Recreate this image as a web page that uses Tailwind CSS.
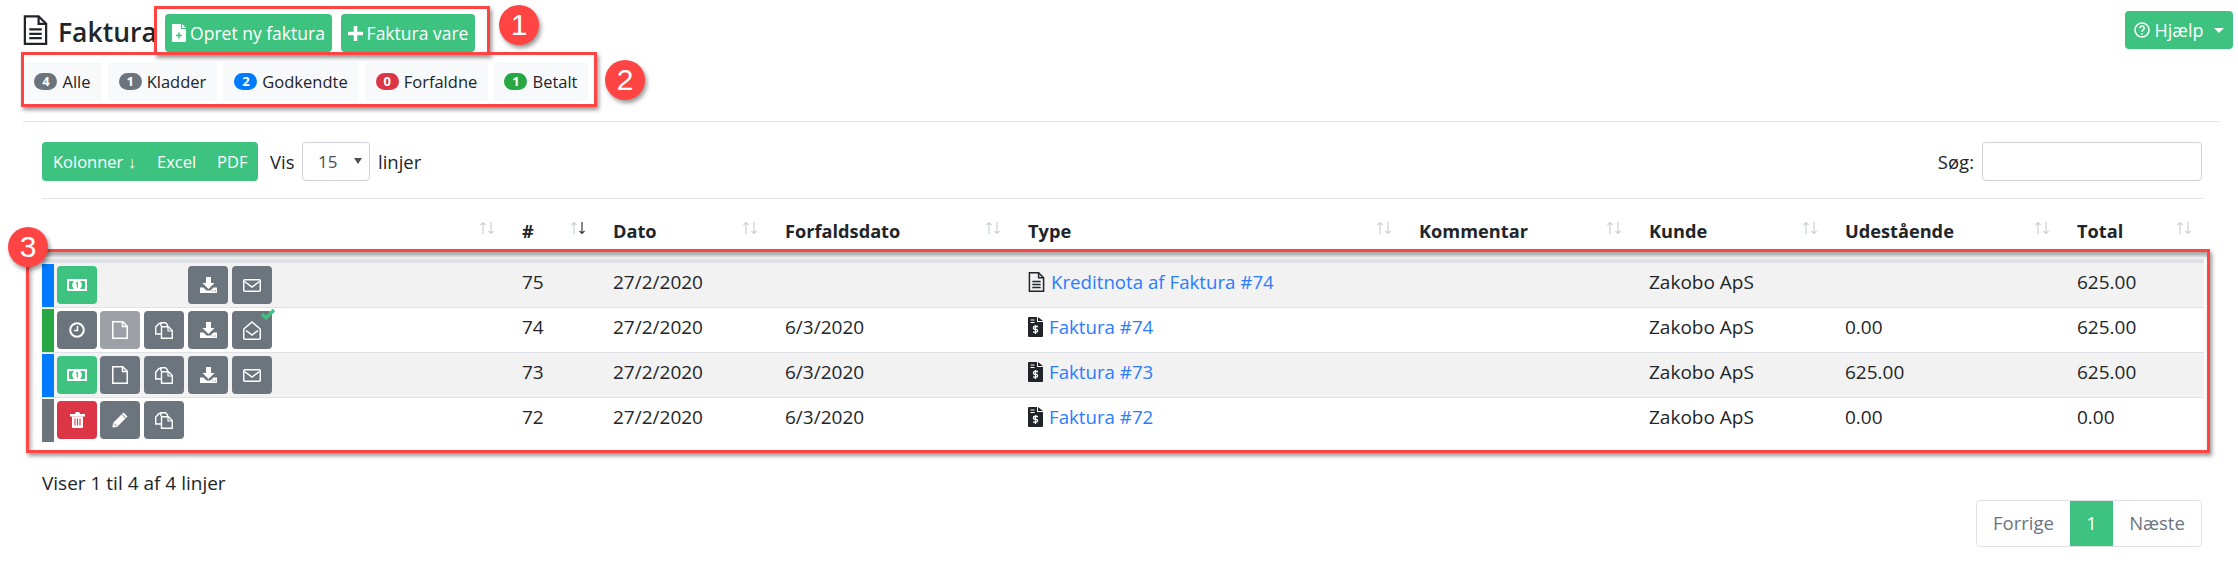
<!DOCTYPE html>
<html lang="da">
<head>
<meta charset="utf-8">
<title>Faktura</title>
<script src="https://cdn.jsdelivr.net/npm/@tailwindcss/browser@4"></script>
</head>
<body class="relative h-[567px] w-[2238px] overflow-hidden bg-white font-['Open_Sans',sans-serif] text-[18.5px] leading-6 text-[#212529]">
  <!-- icon sprite -->
  <svg class="hidden" aria-hidden="true">
    <symbol id="i-doc-lines" viewBox="0 0 20 24"><path d="M1.5 1h11l6 6v16h-17z" fill="none" stroke="currentColor" stroke-width="1.8"/><path d="M12.5 1v6h6" fill="none" stroke="currentColor" stroke-width="1.8"/><path d="M5 11.5h10M5 15h10M5 18.5h10" stroke="currentColor" stroke-width="1.8"/></symbol>
    <symbol id="i-invoice" viewBox="0 0 15 20"><path d="M0 1a1 1 0 0 1 1-1h8v5h6v14a1 1 0 0 1-1 1H1a1 1 0 0 1-1-1z" fill="currentColor"/><path d="M10 0l5 4h-5z" fill="currentColor"/><path d="M2.500 3h4M2.500 5.500h4" stroke="#fff" stroke-width="1.200"/><path d="M10 9.500H6.800a1.300 1.300 0 0 0 0 2.800h1.400a1.300 1.300 0 0 1 0 2.800H5M7.500 8v9" fill="none" stroke="#fff" stroke-width="1.300"/></symbol>
    <symbol id="i-file-plus" viewBox="0 0 14 18"><path d="M0 1q0-1 1-1h8v5h5v12q0 1-1 1H1q-1 0-1-1z" fill="currentColor"/><path d="M10 0l4 4h-4z" fill="currentColor"/><path d="M7 8.500v6M4 11.500h6" stroke="#3dc37f" stroke-width="1.500"/></symbol>
    <symbol id="i-plus" viewBox="0 0 15 15"><path d="M7.500 1v13M1 7.500h13" stroke="currentColor" stroke-width="3.600" stroke-linecap="round"/></symbol>
    <symbol id="i-money" viewBox="0 0 20 12"><rect width="20" height="12" fill="#fff"/><rect x="2" y="2" width="16" height="8" rx="1" fill="#3dc37f"/><circle cx="10" cy="6" r="4.800" fill="#fff"/><path d="M9 4.200l1.300-.7v5" fill="none" stroke="#3dc37f" stroke-width="1.200"/></symbol>
    <symbol id="i-download" viewBox="0 0 17 16"><path d="M6 0h5v6h3.500l-6 6-6-6H6z" fill="#fff"/><path d="M0 10.500h3.500l3 3h4l3-3H17V16H0z" fill="#fff"/><path d="M12.500 14h1M15 14h1" stroke="#6c757d"/></symbol>
    <symbol id="i-mail" viewBox="0 0 18 13"><rect x=".75" y=".75" width="16.500" height="11.500" rx="1" fill="none" stroke="#fff" stroke-width="1.500"/><path d="M1.500 2.500L9 8l7.500-5.500" fill="none" stroke="#fff" stroke-width="1.500"/></symbol>
    <symbol id="i-mail-open" viewBox="0 0 18 19"><path d="M.75 8L9 1l8.250 7v9.250a1 1 0 0 1-1 1H1.750a1 1 0 0 1-1-1z" fill="none" stroke="#fff" stroke-width="1.500"/><path d="M3 9.500l6 4.500 6-4.500" fill="none" stroke="#fff" stroke-width="1.500"/></symbol>
    <symbol id="i-clock" viewBox="0 0 16 16"><circle cx="8" cy="8" r="6.800" fill="none" stroke="#fff" stroke-width="2"/><path d="M8.500 4v4.500H5" fill="none" stroke="#fff" stroke-width="1.500"/></symbol>
    <symbol id="i-file" viewBox="0 0 16 18"><path d="M.75.75h10l4.500 4.500v12H.75z" fill="none" stroke="#fff" stroke-width="1.500"/><path d="M10.500.75v4.750h4.750" fill="none" stroke="#fff" stroke-width="1.500"/></symbol>
    <symbol id="i-copy" viewBox="0 0 18 17"><path d="M6 4V.75h4.500l2 2V4M6 12H.75V5L4 1.500h2" fill="none" stroke="#fff" stroke-width="1.400"/><path d="M6.500 4.750h7l3.750 3.750v7.750H6.500z" fill="#6c757d" stroke="#fff" stroke-width="1.400"/><path d="M13 5v4h4" fill="none" stroke="#fff" stroke-width="1.200"/></symbol>
    <symbol id="i-trash" viewBox="0 0 15 16"><path d="M0 2.500h15v1.500H0zM5 2.500l1-2h3l1 2" fill="#fff" stroke="#fff"/><path d="M2 4.500h11V15q0 1-1 1H3q-1 0-1-1z" fill="#fff"/><path d="M5 6.500v7M7.500 6.500v7M10 6.500v7" stroke="#dc3545" stroke-width="1.100"/></symbol>
    <symbol id="i-pencil" viewBox="0 0 16 16"><path d="M11.500.5l4 4L5 15 .5 15.500 1 11z" fill="#fff"/><path d="M10 2.500l3.500 3.500" stroke="#6c757d"/><path d="M2 11.500l2.500 2.500" stroke="#6c757d"/></symbol>
    <symbol id="i-sort" viewBox="0 0 16 14"><path d="M4 13V1.500M1.500 4L4 1.500 6.500 4" fill="none" stroke="#ced2d6" stroke-width="1.200"/><path d="M12 1v11.500M9.500 10l2.500 2.500 2.500-2.500" fill="none" stroke="#ced2d6" stroke-width="1.200"/></symbol>
    <symbol id="i-sort-down" viewBox="0 0 16 14"><path d="M4 13V1.500M1.500 4L4 1.500 6.500 4" fill="none" stroke="#ced2d6" stroke-width="1.200"/><path d="M12 1v11.500M9.500 10l2.500 2.500 2.500-2.500" fill="none" stroke="#343a40" stroke-width="1.200"/></symbol>
  </svg>

  <!-- title row -->
  <div class="flex items-start pl-[23px] pr-[5px] pt-[11px]">
    <svg class="mt-[4px] h-[30px] w-[25px]"><use href="#i-doc-lines"/></svg>
    <h1 class="ml-[10px] mr-[11px] mt-[3px] w-[96px] whitespace-nowrap text-[26.5px] leading-[36px] font-semibold">Faktura</h1>
    <div class="mt-[3px] flex gap-[9px] text-[17.5px]">
      <a class="flex h-[38px] w-[167px] items-center justify-center gap-[4px] rounded bg-[#3dc37f] whitespace-nowrap text-white"><svg class="h-[18px] w-[14px]"><use href="#i-file-plus"/></svg>Opret ny faktura</a>
      <a class="flex h-[38px] w-[134px] items-center justify-center gap-[4px] rounded bg-[#3dc37f] whitespace-nowrap text-white"><svg class="h-[15px] w-[15px]"><use href="#i-plus"/></svg>Faktura vare</a>
    </div>
    <a class="ml-auto flex h-[38px] w-[108px] items-center justify-center gap-[5px] rounded bg-[#3dc37f] text-[18px] text-white">
      <svg class="h-4 w-4" viewBox="0 0 16 16"><circle cx="8" cy="8" r="7" fill="none" stroke="currentColor" stroke-width="1.6"/><path d="M5.800 6.200a2.200 2.200 0 1 1 3.400 1.800c-.8.5-1.200 1-1.200 1.800" fill="none" stroke="currentColor" stroke-width="1.500"/><path d="M8 11.200v1.600" stroke="currentColor" stroke-width="1.600"/></svg>
      Hjælp
      <span class="ml-[6px] border-x-[5px] border-t-[5px] border-x-transparent border-t-white"></span>
    </a>
  </div>

  <!-- status tabs -->
  <nav class="ml-[23px] mt-[10px] flex h-[39px] gap-[6px] whitespace-nowrap text-[16.5px]">
    <a class="flex w-[79px] items-center justify-center gap-[5px] rounded bg-[#f8f9fa]"><span class="w-[23px] rounded-full bg-[#6c757d] text-center text-[13px] leading-[17px] font-bold text-white">4</span>Alle</a>
    <a class="flex w-[109px] items-center justify-center gap-[5px] rounded bg-[#f8f9fa]"><span class="w-[23px] rounded-full bg-[#6c757d] text-center text-[13px] leading-[17px] font-bold text-white">1</span>Kladder</a>
    <a class="flex w-[136px] items-center justify-center gap-[5px] rounded bg-[#f8f9fa]"><span class="w-[23px] rounded-full bg-[#007bff] text-center text-[13px] leading-[17px] font-bold text-white">2</span>Godkendte</a>
    <a class="flex w-[123px] items-center justify-center gap-[5px] rounded bg-[#f8f9fa]"><span class="w-[23px] rounded-full bg-[#dc3545] text-center text-[13px] leading-[17px] font-bold text-white">0</span>Forfaldne</a>
    <a class="flex w-[94px] items-center justify-center gap-[5px] rounded bg-[#f8f9fa]"><span class="w-[23px] rounded-full bg-[#28a745] text-center text-[13px] leading-[17px] font-bold text-white">1</span>Betalt</a>
  </nav>

  <hr class="ml-[23px] mt-[20px] w-[2197px] border-t border-[#e2e4e8]">

  <section class="ml-[42px] w-[2162px]">
    <!-- table tools -->
    <div class="mt-[20px] flex h-[39px] items-center whitespace-nowrap">
      <div class="flex h-full w-[216px] items-center rounded bg-[#3dc37f] text-[16.5px] text-white">
        <span class="ml-[11px] w-[104px]">Kolonner ↓</span>
        <span class="w-[60px]">Excel</span>
        <span>PDF</span>
      </div>
      <span class="ml-[12px] w-[32px]">Vis</span>
      <div class="relative h-full w-[68px]">
        <select class="h-full w-full appearance-none rounded border border-[#ced4da] bg-white pl-[15px] text-[17px] text-[#495057]"><option>15</option></select>
        <span class="absolute right-[8px] top-[16px] border-x-[4px] border-t-[6px] border-x-transparent border-t-[#495057]"></span>
      </div>
      <span class="ml-[8px]">linjer</span>
      <label class="ml-auto mr-[2px] flex h-full items-center gap-[8px]">Søg:
        <input class="h-full w-[220px] rounded border border-[#ced4da] bg-white" type="text">
      </label>
    </div>

    <hr class="mt-[17px] border-t border-[#e2e4e8]">

    <table class="w-full table-fixed border-collapse whitespace-nowrap text-[19px]">
      <colgroup>
        <col class="w-[469px]"><col class="w-[91px]"><col class="w-[172px]"><col class="w-[243px]"><col class="w-[391px]"><col class="w-[230px]"><col class="w-[196px]"><col class="w-[232px]"><col class="w-[138px]">
      </colgroup>
      <thead>
        <tr class="h-[62px] border-b-4 border-[#dee2e6] text-left text-[18.2px] font-bold">
          <th class="pr-[16px] pt-[3px] font-bold"><div class="flex justify-end"><svg class="mb-[5px] h-[14px] w-[16px]"><use href="#i-sort"/></svg></div></th>
          <th class="pl-[11px] pr-[16px] pt-[3px] font-bold"><div class="flex items-center justify-between">#<svg class="mb-[5px] h-[14px] w-[16px]"><use href="#i-sort-down"/></svg></div></th>
          <th class="pl-[11px] pr-[16px] pt-[3px] font-bold"><div class="flex items-center justify-between">Dato<svg class="mb-[5px] h-[14px] w-[16px]"><use href="#i-sort"/></svg></div></th>
          <th class="pl-[11px] pr-[16px] pt-[3px] font-bold"><div class="flex items-center justify-between">Forfaldsdato<svg class="mb-[5px] h-[14px] w-[16px]"><use href="#i-sort"/></svg></div></th>
          <th class="pl-[11px] pr-[16px] pt-[3px] font-bold"><div class="flex items-center justify-between">Type<svg class="mb-[5px] h-[14px] w-[16px]"><use href="#i-sort"/></svg></div></th>
          <th class="pl-[11px] pr-[16px] pt-[3px] font-bold"><div class="flex items-center justify-between">Kommentar<svg class="mb-[5px] h-[14px] w-[16px]"><use href="#i-sort"/></svg></div></th>
          <th class="pl-[11px] pr-[16px] pt-[3px] font-bold"><div class="flex items-center justify-between">Kunde<svg class="mb-[5px] h-[14px] w-[16px]"><use href="#i-sort"/></svg></div></th>
          <th class="pl-[11px] pr-[16px] pt-[3px] font-bold"><div class="flex items-center justify-between">Udestående<svg class="mb-[5px] h-[14px] w-[16px]"><use href="#i-sort"/></svg></div></th>
          <th class="pl-[11px] pr-[12px] pt-[3px] font-bold"><div class="flex items-center justify-between">Total<svg class="mb-[5px] h-[14px] w-[16px]"><use href="#i-sort"/></svg></div></th>
        </tr>
      </thead>
      <tbody>
        <tr class="h-[45px] border-b border-[#dee2e6] bg-[#f2f2f2]">
          <td class="p-0">
            <div class="flex h-[44px] items-center gap-[4px]">
              <span class="mr-[-1px] h-[43px] w-[12px] self-end bg-[#007bff]"></span>
              <a class="flex h-[38px] w-10 items-center justify-center rounded bg-[#3dc37f]"><svg class="h-[12px] w-[20px]"><use href="#i-money"/></svg></a>
              <span class="w-10 -ml-px"></span>
              <span class="w-10"></span>
              <a class="flex h-[38px] w-10 items-center justify-center rounded bg-[#6c757d]"><svg class="h-[16px] w-[17px]"><use href="#i-download"/></svg></a>
              <a class="flex h-[38px] w-10 items-center justify-center rounded bg-[#6c757d]"><svg class="h-[13px] w-[18px]"><use href="#i-mail"/></svg></a>
            </div>
          </td>
          <td class="pl-[11px] pb-[6px]">75</td>
          <td class="pl-[11px] pb-[6px]">27/2/2020</td>
          <td class="pl-[11px] pb-[6px]"></td>
          <td colspan="2" class="pl-[11px] pb-[6px]"><a class="flex items-center gap-[6px] text-[18.7px] text-[#2b7cff]"><svg class="h-[20px] w-[17px] text-[#212529]"><use href="#i-doc-lines"/></svg>Kreditnota af Faktura #74</a></td>
          <td class="pl-[11px] pb-[6px]">Zakobo ApS</td>
          <td class="pl-[11px] pb-[6px]"></td>
          <td class="pl-[11px] pb-[6px]">625.00</td>
        </tr>
        <tr class="h-[45px] border-b border-[#dee2e6]">
          <td class="p-0">
            <div class="flex h-[44px] items-center gap-[4px]">
              <span class="mr-[-1px] h-[43px] w-[12px] self-end bg-[#28a745]"></span>
              <a class="flex h-[38px] w-10 items-center justify-center rounded bg-[#6c757d]"><svg class="h-4 w-4"><use href="#i-clock"/></svg></a>
              <a class="flex h-[38px] w-10 -ml-px items-center justify-center rounded bg-[#9da1a7]"><svg class="h-[18px] w-4"><use href="#i-file"/></svg></a>
              <a class="flex h-[38px] w-10 items-center justify-center rounded bg-[#6c757d]"><svg class="h-[17px] w-[18px]"><use href="#i-copy"/></svg></a>
              <a class="flex h-[38px] w-10 items-center justify-center rounded bg-[#6c757d]"><svg class="h-[16px] w-[17px]"><use href="#i-download"/></svg></a>
              <a class="relative flex h-[38px] w-10 items-center justify-center rounded bg-[#6c757d]">
                <svg class="h-[19px] w-[18px]"><use href="#i-mail-open"/></svg>
                <svg class="absolute -right-[4px] -top-[3px] h-[12px] w-[16px]" viewBox="0 0 16 12"><path d="M2 6l4 4 8-8" fill="none" stroke="#3dc37f" stroke-width="3.2"/></svg>
              </a>
            </div>
          </td>
          <td class="pl-[11px] pb-[6px]">74</td>
          <td class="pl-[11px] pb-[6px]">27/2/2020</td>
          <td class="pl-[11px] pb-[6px]">6/3/2020</td>
          <td colspan="2" class="pl-[11px] pb-[6px]"><a class="flex items-center gap-[6px] text-[18.7px] text-[#2b7cff]"><svg class="h-[20px] w-[15px] text-[#212529]"><use href="#i-invoice"/></svg>Faktura #74</a></td>
          <td class="pl-[11px] pb-[6px]">Zakobo ApS</td>
          <td class="pl-[11px] pb-[6px]">0.00</td>
          <td class="pl-[11px] pb-[6px]">625.00</td>
        </tr>
        <tr class="h-[45px] border-b border-[#dee2e6] bg-[#f2f2f2]">
          <td class="p-0">
            <div class="flex h-[44px] items-center gap-[4px]">
              <span class="mr-[-1px] h-[43px] w-[12px] self-end bg-[#007bff]"></span>
              <a class="flex h-[38px] w-10 items-center justify-center rounded bg-[#3dc37f]"><svg class="h-[12px] w-[20px]"><use href="#i-money"/></svg></a>
              <a class="flex h-[38px] w-10 -ml-px items-center justify-center rounded bg-[#6c757d]"><svg class="h-[18px] w-4"><use href="#i-file"/></svg></a>
              <a class="flex h-[38px] w-10 items-center justify-center rounded bg-[#6c757d]"><svg class="h-[17px] w-[18px]"><use href="#i-copy"/></svg></a>
              <a class="flex h-[38px] w-10 items-center justify-center rounded bg-[#6c757d]"><svg class="h-[16px] w-[17px]"><use href="#i-download"/></svg></a>
              <a class="flex h-[38px] w-10 items-center justify-center rounded bg-[#6c757d]"><svg class="h-[13px] w-[18px]"><use href="#i-mail"/></svg></a>
            </div>
          </td>
          <td class="pl-[11px] pb-[6px]">73</td>
          <td class="pl-[11px] pb-[6px]">27/2/2020</td>
          <td class="pl-[11px] pb-[6px]">6/3/2020</td>
          <td colspan="2" class="pl-[11px] pb-[6px]"><a class="flex items-center gap-[6px] text-[18.7px] text-[#2b7cff]"><svg class="h-[20px] w-[15px] text-[#212529]"><use href="#i-invoice"/></svg>Faktura #73</a></td>
          <td class="pl-[11px] pb-[6px]">Zakobo ApS</td>
          <td class="pl-[11px] pb-[6px]">625.00</td>
          <td class="pl-[11px] pb-[6px]">625.00</td>
        </tr>
        <tr class="h-[45px]">
          <td class="p-0">
            <div class="flex h-[44px] items-center gap-[4px]">
              <span class="mr-[-1px] h-[43px] w-[12px] self-end bg-[#6c757d]"></span>
              <a class="flex h-[38px] w-10 items-center justify-center rounded bg-[#dc3545]"><svg class="h-4 w-[15px]"><use href="#i-trash"/></svg></a>
              <a class="flex h-[38px] w-10 -ml-px items-center justify-center rounded bg-[#6c757d]"><svg class="h-4 w-4"><use href="#i-pencil"/></svg></a>
              <a class="flex h-[38px] w-10 items-center justify-center rounded bg-[#6c757d]"><svg class="h-[17px] w-[18px]"><use href="#i-copy"/></svg></a>
            </div>
          </td>
          <td class="pl-[11px] pb-[6px]">72</td>
          <td class="pl-[11px] pb-[6px]">27/2/2020</td>
          <td class="pl-[11px] pb-[6px]">6/3/2020</td>
          <td colspan="2" class="pl-[11px] pb-[6px]"><a class="flex items-center gap-[6px] text-[18.7px] text-[#2b7cff]"><svg class="h-[20px] w-[15px] text-[#212529]"><use href="#i-invoice"/></svg>Faktura #72</a></td>
          <td class="pl-[11px] pb-[6px]">Zakobo ApS</td>
          <td class="pl-[11px] pb-[6px]">0.00</td>
          <td class="pl-[11px] pb-[6px]">0.00</td>
        </tr>
      </tbody>
    </table>

    <p class="mt-[28px] text-[19px]">Viser 1 til 4 af 4 linjer</p>
    <div class="mt-[5px] flex justify-end">
      <div class="mr-[2px] flex h-[47px] items-stretch overflow-hidden rounded border border-[#dee2e6] text-[#6c757d]">
        <span class="flex w-[93px] items-center justify-center">Forrige</span>
        <span class="flex w-[43px] items-center justify-center bg-[#3dc37f] text-white">1</span>
        <span class="flex w-[88px] items-center justify-center">Næste</span>
      </div>
    </div>
  </section>

  <!-- annotations on top of the screenshot -->
  <div class="absolute left-[154px] top-[6px] h-[49px] w-[336px] border-[3px] border-[#ff4444] shadow-[2px_3px_4px_rgba(0,0,0,0.4)]"></div>
  <div class="absolute left-[21px] top-[52px] h-[55px] w-[576px] border-[3px] border-[#ff4444] shadow-[2px_3px_4px_rgba(0,0,0,0.4)]"></div>
  <div class="absolute left-[26px] top-[249px] h-[204px] w-[2184px] border-[3px] border-[#ff4444] shadow-[2px_3px_4px_rgba(0,0,0,0.4),inset_2px_4px_4px_rgba(0,0,0,0.35)]"></div>
  <div class="absolute left-[499px] top-[5px] flex h-10 w-10 items-center justify-center rounded-full bg-[#ff4444] font-['Liberation_Sans',sans-serif] text-[30px] text-white shadow-[2px_3px_4px_rgba(0,0,0,0.4)]">1</div>
  <div class="absolute left-[605px] top-[60px] flex h-10 w-10 items-center justify-center rounded-full bg-[#ff4444] font-['Liberation_Sans',sans-serif] text-[30px] text-white shadow-[2px_3px_4px_rgba(0,0,0,0.4)]">2</div>
  <div class="absolute left-[8px] top-[227px] flex h-10 w-10 items-center justify-center rounded-full bg-[#ff4444] font-['Liberation_Sans',sans-serif] text-[30px] text-white shadow-[2px_3px_4px_rgba(0,0,0,0.4)]">3</div>
</body>
</html>
